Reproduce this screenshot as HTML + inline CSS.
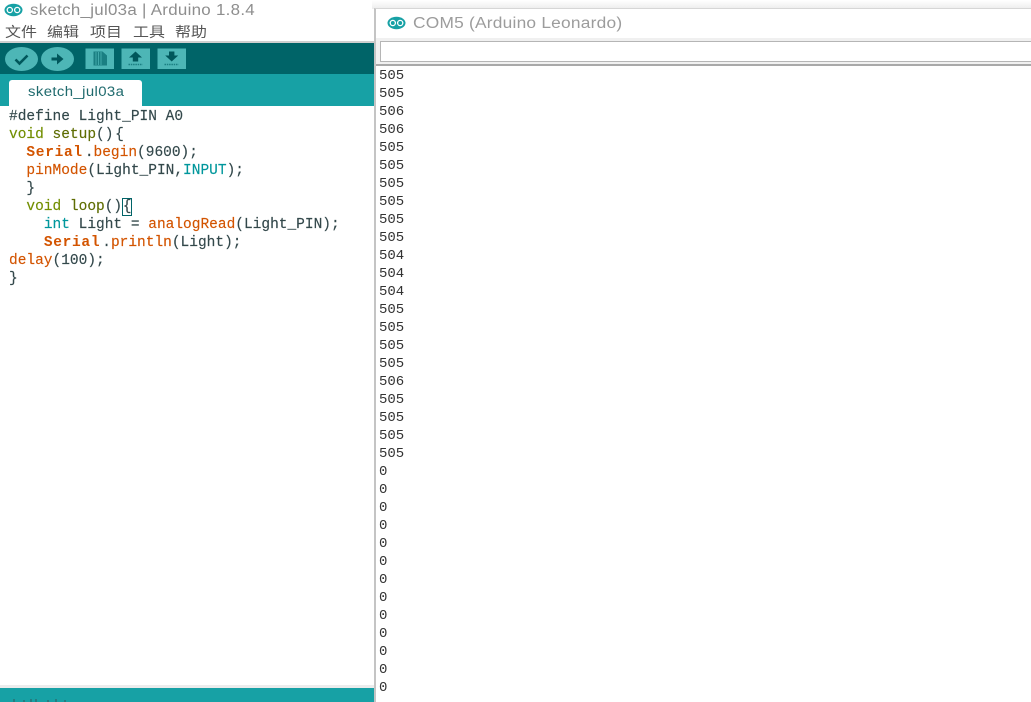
<!DOCTYPE html>
<html>
<head>
<meta charset="utf-8">
<style>
html,body{margin:0;padding:0;width:1031px;height:702px;overflow:hidden;background:#fff;}
body{position:relative;font-family:"Liberation Sans","Noto Sans CJK SC",sans-serif;}
.a{position:absolute;}
.t{position:absolute;white-space:pre;transform-origin:left top;}
.m{font-size:14px;line-height:17px;color:#555;top:24px;transform:scaleX(1.14);}
.code{position:absolute;left:9px;top:108px;font:14.5px/18px "Liberation Mono",monospace;color:#33484b;white-space:pre;margin:0;-webkit-text-stroke:0.15px #33484b;}
.o{color:#d35400;-webkit-text-stroke:0.15px #d35400;}
.b{color:#d35400;font-weight:bold;letter-spacing:.7px;margin-right:2px;-webkit-text-stroke:0;}
.g{color:#728e00;-webkit-text-stroke:0.15px #728e00;}
.c{color:#00979c;-webkit-text-stroke:0.15px #00979c;}
.gr{color:#5e6d03;-webkit-text-stroke:0.15px #5e6d03;}
.s{position:absolute;left:379px;top:67px;font:14px/18px "Liberation Mono",monospace;color:#333;white-space:pre;margin:0;}
</style>
</head>
<body>
<svg class="a" style="left:4px;top:3px" width="19" height="14" viewBox="0 0 19 14"><ellipse cx="9.500" cy="7" rx="9" ry="6.200" fill="#17a1a5"/><circle cx="5.800" cy="7" r="2.600" fill="none" stroke="#fff" stroke-width="1.300"/><circle cx="13.200" cy="7" r="2.600" fill="none" stroke="#fff" stroke-width="1.300"/></svg>
<div class="t" style="left:30px;top:2px;font-size:15.500px;line-height:18px;color:#8e8e8e;letter-spacing:.25px;transform:scaleX(1.092)">sketch_jul03a | Arduino 1.8.4</div>
<div class="t m" style="left:5px">文件</div>
<div class="t m" style="left:47px">编辑</div>
<div class="t m" style="left:90px">项目</div>
<div class="t m" style="left:133px">工具</div>
<div class="t m" style="left:175px">帮助</div>

<div class="a" style="left:0;top:41px;width:375px;height:2px;background:#cfcfcf"></div>
<div class="a" style="left:0;top:43px;width:375px;height:31px;background:#006468"></div>
<div class="a" style="left:0;top:74px;width:375px;height:32px;background:#17a1a5"></div>
<div class="a" style="left:9px;top:80px;width:133px;height:26px;background:#fff;border-radius:3px 3px 0 0"></div>
<div class="t" style="left:28px;top:83px;font-size:13.500px;line-height:17px;color:#1f6a6d;letter-spacing:.35px;transform:scaleX(1.105)">sketch_jul03a</div>

<svg class="a" style="left:0;top:43px" width="200" height="31" viewBox="0 0 200 31">
<ellipse cx="21.500" cy="16" rx="16.500" ry="12" fill="#4db6b6"/>
<path d="M15.500 16.500l4 4 8-8" fill="none" stroke="#00575b" stroke-width="2.600"/>
<ellipse cx="57.500" cy="16" rx="16.500" ry="12" fill="#4db6b6"/>
<path d="M51.500 14.500h5.500v-4l6.500 5.500-6.500 5.500v-4h-5.500z" fill="#00575b"/>
<rect x="85.500" y="5.500" width="28.500" height="20.500" fill="#4db6b6"/>
<path d="M93.500 8.500h9l4.500 4v10h-13.500z" fill="#1a7f82"/>
<path d="M96 9v13M98.500 9v13M101 9v13" stroke="#4db6b6" stroke-width=".8"/>
<rect x="121.500" y="5.500" width="28.500" height="20.500" fill="#4db6b6"/>
<path d="M135.500 8.500l6.500 6h-3.800v4h-5.400v-4h-3.800z" fill="#00575b"/>
<path d="M128.500 21.500h14" stroke="#1a7f82" stroke-width="1.500" stroke-dasharray="1.500 .8"/>
<rect x="157.500" y="5.500" width="28.500" height="20.500" fill="#4db6b6"/>
<path d="M169 8.500h5.400v4h3.800l-6.500 6-6.500-6h3.800z" fill="#00575b"/>
<path d="M164.500 21.500h14" stroke="#1a7f82" stroke-width="1.500" stroke-dasharray="1.500 .8"/>
</svg>

<pre class="code">#define Light_PIN A0
<span class="g">void</span> <span class="gr">setup</span>()<span style="margin-left:-7px"> {</span>
  <span class="b">Serial</span>.<span class="o">begin</span>(9600);
  <span class="o">pinMode</span>(Light_PIN,<span class="c">INPUT</span>);
  }
  <span class="g">void</span> <span class="gr">loop</span>()<span style="margin-left:-8px"> {</span>
    <span class="c">int</span> Light = <span class="o">analogRead</span>(Light_PIN);
    <span class="b">Serial</span>.<span class="o">println</span>(Light);
<span class="o">delay</span>(100);
}</pre>
<div class="a" style="left:122px;top:198px;width:8px;height:16px;border:1px solid #006468"></div>

<div class="a" style="left:0;top:685px;width:375px;height:3px;background:#ececec"></div>
<div class="a" style="left:0;top:688px;width:375px;height:14px;background:#17a1a5"></div>
<div class="a" style="left:10px;top:699px;width:60px;height:3px;overflow:hidden"><svg width="60" height="3" style="display:block"><path d="M4 0v3M14 1v2M21 0v3M26 0v3M38 1v2M46 0v3M55 1v2" stroke="#33565a" stroke-width="1"/></svg></div>

<div class="a" style="left:372px;top:0;width:659px;height:9px;background:linear-gradient(#fff,#ececec)"></div>
<div class="a" style="left:374px;top:8px;width:657px;height:694px;background:#fff;border-left:2px solid #c4c4c4;border-top:1px solid #d6d6d6;box-sizing:border-box"></div>
<svg class="a" style="left:387px;top:16px" width="19" height="14" viewBox="0 0 19 14"><ellipse cx="9.500" cy="7" rx="9" ry="6.200" fill="#17a1a5"/><circle cx="5.800" cy="7" r="2.600" fill="none" stroke="#fff" stroke-width="1.300"/><circle cx="13.200" cy="7" r="2.600" fill="none" stroke="#fff" stroke-width="1.300"/></svg>
<div class="t" style="left:413px;top:15px;font-size:15.500px;line-height:18px;color:#9c9c9c;letter-spacing:.2px;transform:scaleX(1.118)">COM5 (Arduino Leonardo)</div>
<div class="a" style="left:376px;top:38px;width:655px;height:27px;background:#f0f0f0"></div>
<div class="a" style="left:380px;top:41px;width:651px;height:21px;background:#fff;border:1px solid #b5b5b5;border-right:none;box-sizing:border-box"></div>
<div class="a" style="left:376px;top:64px;width:655px;height:2px;background:#a9a9a9"></div>
<pre class="s">505
505
506
506
505
505
505
505
505
505
504
504
504
505
505
505
505
506
505
505
505
505
0
0
0
0
0
0
0
0
0
0
0
0
0</pre>
</body>
</html>
